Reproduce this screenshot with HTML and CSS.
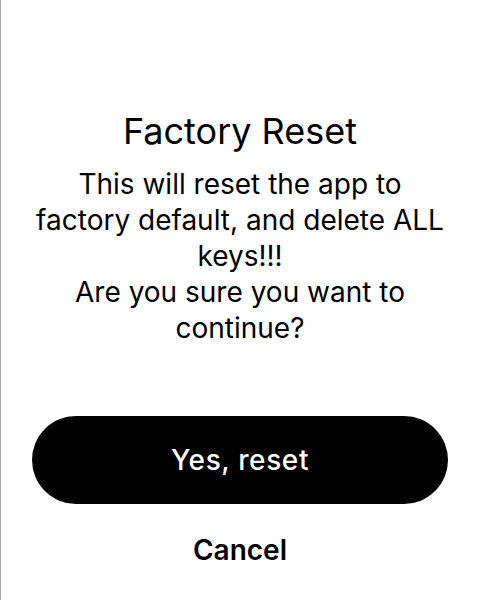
FILE: index.html
```html
<!DOCTYPE html>
<html>
<head>
<meta charset="utf-8">
<link rel="stylesheet" href="styles.css">
</head>
<body>
<div class="screen">
  <div class="dialog">
    <h1 class="title">Factory Reset</h1>
    <p class="message">This will reset the app to factory default, and delete ALL keys!!!<br>Are you sure you want to continue?</p>
    <div class="actions">
      <button class="btn-primary">Yes, reset</button>
      <button class="btn-text">Cancel</button>
    </div>
  </div>
</div>
</body>
</html>
```
FILE: styles.css
```css
html, body {
  margin: 0;
  padding: 0;
  background: #fff;
}
.screen {
  width: 480px;
  height: 600px;
  box-sizing: border-box;
  border-left: 1px solid #aaaaaa;
  font-family: Inter, "Noto Sans", sans-serif;
  color: #000;
}
.dialog {
  display: flex;
  flex-direction: column;
  align-items: center;
  padding: 111px 32px 0 31px;
}
.title {
  margin: 0;
  font-size: 36px;
  line-height: 40px;
  font-weight: 400;
  text-align: center;
}
.message {
  margin: 15px 0 0;
  font-size: 28px;
  line-height: 36px;
  text-align: center;
}
.actions {
  margin-top: 70px;
  width: 100%;
  display: flex;
  flex-direction: column;
  align-items: center;
}
.btn-primary {
  width: 100%;
  height: 88px;
  border: none;
  border-radius: 44px;
  background: #000;
  color: #fff;
  font-family: inherit;
  font-size: 28px;
  font-weight: 500;
  letter-spacing: 0.6px;
  cursor: pointer;
}
.btn-text {
  margin-top: 31px;
  border: none;
  background: none;
  color: #000;
  font-family: inherit;
  font-size: 28px;
  font-weight: 600;
  line-height: 30px;
  padding: 0;
}
```
